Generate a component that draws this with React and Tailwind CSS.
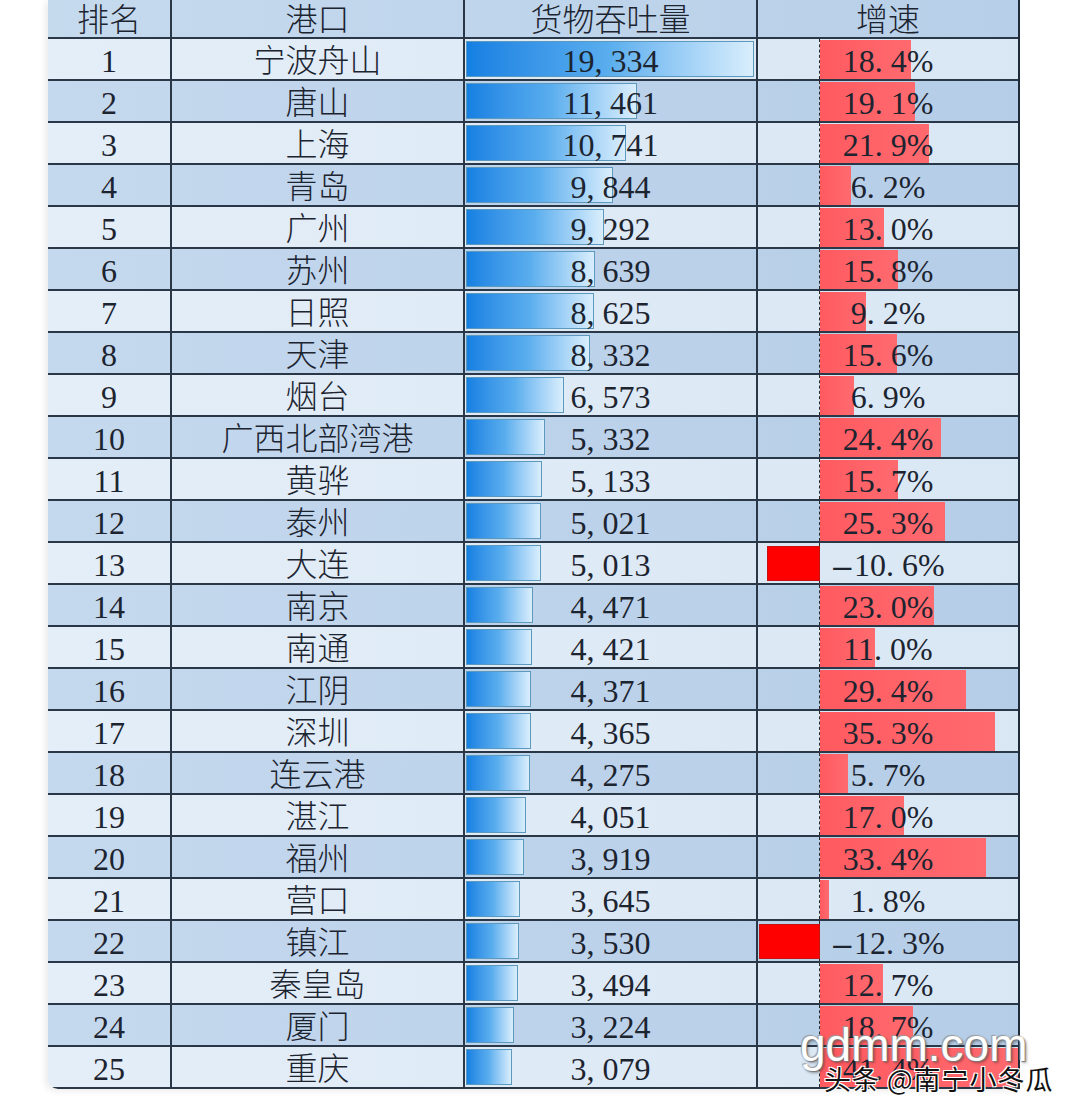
import React from 'react';

const ports = [
  { rank: 1, name: '宁波舟山', volume: 19334, growth: 18.4 },
  { rank: 2, name: '唐山', volume: 11461, growth: 19.1 },
  { rank: 3, name: '上海', volume: 10741, growth: 21.9 },
  { rank: 4, name: '青岛', volume: 9844, growth: 6.2 },
  { rank: 5, name: '广州', volume: 9292, growth: 13.0 },
  { rank: 6, name: '苏州', volume: 8639, growth: 15.8 },
  { rank: 7, name: '日照', volume: 8625, growth: 9.2 },
  { rank: 8, name: '天津', volume: 8332, growth: 15.6 },
  { rank: 9, name: '烟台', volume: 6573, growth: 6.9 },
  { rank: 10, name: '广西北部湾港', volume: 5332, growth: 24.4 },
  { rank: 11, name: '黄骅', volume: 5133, growth: 15.7 },
  { rank: 12, name: '泰州', volume: 5021, growth: 25.3 },
  { rank: 13, name: '大连', volume: 5013, growth: -10.6 },
  { rank: 14, name: '南京', volume: 4471, growth: 23.0 },
  { rank: 15, name: '南通', volume: 4421, growth: 11.0 },
  { rank: 16, name: '江阴', volume: 4371, growth: 29.4 },
  { rank: 17, name: '深圳', volume: 4365, growth: 35.3 },
  { rank: 18, name: '连云港', volume: 4275, growth: 5.7 },
  { rank: 19, name: '湛江', volume: 4051, growth: 17.0 },
  { rank: 20, name: '福州', volume: 3919, growth: 33.4 },
  { rank: 21, name: '营口', volume: 3645, growth: 1.8 },
  { rank: 22, name: '镇江', volume: 3530, growth: -12.3 },
  { rank: 23, name: '秦皇岛', volume: 3494, growth: 12.7 },
  { rank: 24, name: '厦门', volume: 3224, growth: 18.7 },
  { rank: 25, name: '重庆', volume: 3079, growth: 41.4 },
];

const MAX_VOL = 19334;
const BAR_W = 288;
const AXIS = 62;
const PX_PER_PCT = 4.96;

// SimSun-like wide punctuation: pad after comma / period, long minus
const Wide = ({ text }) => {
  const parts = text.split(/([,.-])/);
  return (
    <>
      {parts.map((p, i) => {
        if (p === ',' || p === '.') return <span key={i} className="mr-[8px]">{p}</span>;
        if (p === '-') return <span key={i} className="inline-block scale-x-[2.2] mx-[6px]">-</span>;
        return <span key={i}>{p}</span>;
      })}
    </>
  );
};

const fmt = (n) => n.toLocaleString('en-US');

const cell = 'relative flex items-center justify-center pt-[3px]';

const App = () => {
  return (
    <div className="relative w-full h-[1113px] bg-white overflow-hidden font-['Liberation_Serif','Noto_Sans_CJK_SC',serif] text-[32px] text-[#1c2430] leading-none">
      <div className="ml-[48px] w-[972px] border-r-2 border-[#1f2b38] rounded-bl-[10px] overflow-hidden shadow-[-3px_2px_6px_rgba(0,0,0,0.08)]">
        {/* header */}
        <div className="grid grid-cols-[122px_293px_293px_262px] h-[39px] border-b-2 border-[#2a3746] bg-gradient-to-r from-[#c6daee] to-[#b7cfe8]">
          <div className={cell + ' pt-0'}><span className="font-light">排名</span></div>
          <div className={cell + ' pt-0 border-l-2 border-[#2a3746]'}><span className="font-light">港口</span></div>
          <div className={cell + ' pt-0 border-l-2 border-[#2a3746]'}><span className="font-light">货物吞吐量</span></div>
          <div className={cell + ' pt-0 border-l-2 border-[#2a3746]'}><span className="font-light">增速</span></div>
        </div>

        {ports.map((p) => {
          const even = p.rank % 2 === 0;
          const volW = (p.volume / MAX_VOL) * BAR_W;
          const gW = Math.abs(p.growth) * PX_PER_PCT;
          const neg = p.growth < 0;
          return (
            <div
              key={p.rank}
              className={
                'grid grid-cols-[122px_293px_293px_262px] h-[42px] border-b-2 border-[#2a3746] bg-gradient-to-r ' +
                (even ? 'from-[#c5d9ee] to-[#b5cde7]' : 'from-[#e4eef8] to-[#d9e7f4]')
              }
            >
              <div className={cell}>{p.rank}</div>
              <div className={cell + ' border-l-2 border-[#2a3746]'}>
                <span className="font-light">{p.name}</span>
              </div>
              <div className={cell + ' border-l-2 border-[#2a3746]'}>
                <div
                  className="absolute left-[1px] top-[2px] bottom-[2px] border border-[#5d98bd] bg-gradient-to-r from-[#1480e2] via-[#5aaeee] to-[#d9eefc]"
                  style={{ width: volW }}
                />
                <span className="relative"><Wide text={fmt(p.volume)} /></span>
              </div>
              <div className={cell + ' border-l-2 border-[#2a3746] overflow-hidden'}>
                <div className="absolute left-[61px] top-0 bottom-0 border-l border-dashed border-[#2a2a2a]" />
                {neg ? (
                  <div
                    className="absolute top-[3px] bottom-[2px] bg-[#ff0000] border border-[#c81010]"
                    style={{ left: AXIS - gW, width: gW }}
                  />
                ) : (
                  <div
                    className="absolute top-[1px] bottom-0 bg-gradient-to-r from-[#ff5a60] to-[#ff6a6f]"
                    style={{ left: AXIS, width: gW }}
                  />
                )}
                <span className="relative"><Wide text={p.growth.toFixed(1) + '%'} /></span>
              </div>
            </div>
          );
        })}
      </div>

      {/* watermark */}
      <div className="absolute left-[800px] top-[1022px] flex flex-col items-start">
        <div className="font-['Liberation_Sans',sans-serif] text-[46px] leading-none text-white [text-shadow:1px_1px_1px_#777,-1px_-1px_1px_#999,2px_2px_3px_rgba(0,0,0,0.35)]">
          gdmm.com
        </div>
        <div className="ml-[24px] mt-[-3px] font-['Noto_Sans_CJK_SC',sans-serif] text-[27px] tracking-[1px] leading-none text-[#111] [text-shadow:1px_1px_0_#fff,-1px_-1px_0_#fff,1px_-1px_0_#fff,-1px_1px_0_#fff]">
          头条 @南宁小冬瓜
        </div>
      </div>
    </div>
  );
};

export default App;
